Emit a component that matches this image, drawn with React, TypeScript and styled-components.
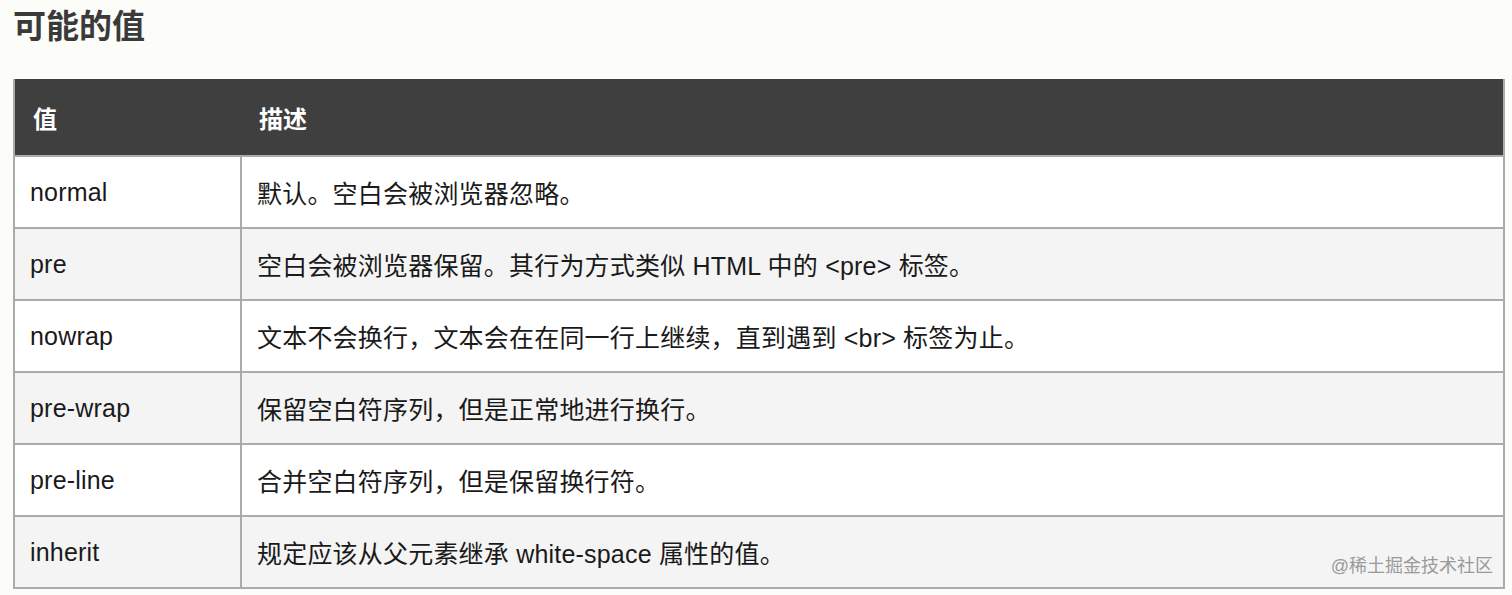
import React from 'react';
import styled, { createGlobalStyle } from 'styled-components';

// ______________________________________________________
//
// @ Data
type Row = { value: string; desc: string };

const ROWS: Row[] = [
  { value: 'normal', desc: '默认。空白会被浏览器忽略。' },
  { value: 'pre', desc: '空白会被浏览器保留。其行为方式类似 HTML 中的 <pre> 标签。' },
  { value: 'nowrap', desc: '文本不会换行，文本会在在同一行上继续，直到遇到 <br> 标签为止。' },
  { value: 'pre-wrap', desc: '保留空白符序列，但是正常地进行换行。' },
  { value: 'pre-line', desc: '合并空白符序列，但是保留换行符。' },
  { value: 'inherit', desc: '规定应该从父元素继承 white-space 属性的值。' },
];

const FONT = '"Liberation Sans", Arial, "Noto Sans CJK SC", sans-serif';

// ______________________________________________________
//
// @ Styles
const GlobalStyle = createGlobalStyle`
  html, body {
    margin: 0;
    padding: 0;
    background: #fcfcf8;
  }
`;

const Page = styled.div`
  position: relative;
  width: 1512px;
  height: 595px;
  padding: 6px 7px 0 13px;
  box-sizing: border-box;
  font-family: ${FONT};
  overflow: hidden;
`;

const Title = styled.h2`
  margin: 0 0 31px;
  font-size: 33px;
  line-height: 42px;
  font-weight: 700;
  color: #3a3a3a;
`;

const Table = styled.table`
  width: 1492px;
  border-collapse: collapse;
  table-layout: fixed;
  border: 2px solid #ababab;
  border-top: none;
`;

const HeadCell = styled.th<{ $width?: number }>`
  width: ${p => (p.$width ? `${p.$width}px` : 'auto')};
  height: 77px;
  padding: 0 18px;
  box-sizing: border-box;
  background: #3f3f3f;
  color: #ffffff;
  font-size: 24px;
  font-weight: 700;
  text-align: left;
  vertical-align: middle;
`;

const BodyRow = styled.tr<{ $shade: boolean }>`
  background: ${p => (p.$shade ? '#f4f4f4' : '#ffffff')};
`;

const Cell = styled.td`
  height: 72px;
  padding: 0 15px;
  box-sizing: border-box;
  border: 2px solid #ababab;
  color: #1a1a1a;
  font-size: 25px;
  letter-spacing: 0.2px;
  vertical-align: middle;
  white-space: nowrap;
`;

const Watermark = styled.div`
  position: absolute;
  right: 19px;
  bottom: 18px;
  font-size: 18px;
  color: #9a9a9a;
  font-family: ${FONT};
`;

// ______________________________________________________
//
// @ Component
const App: React.FC = () => (
  <>
    <GlobalStyle />
    <Page>
      <Title>可能的值</Title>
      <Table>
        <thead>
          <tr>
            <HeadCell $width={227}>值</HeadCell>
            <HeadCell>描述</HeadCell>
          </tr>
        </thead>
        <tbody>
          {ROWS.map((row, i) => (
            <BodyRow key={row.value} $shade={i % 2 === 1}>
              <Cell>{row.value}</Cell>
              <Cell>{row.desc}</Cell>
            </BodyRow>
          ))}
        </tbody>
      </Table>
      <Watermark>@稀土掘金技术社区</Watermark>
    </Page>
  </>
);

export default App;
